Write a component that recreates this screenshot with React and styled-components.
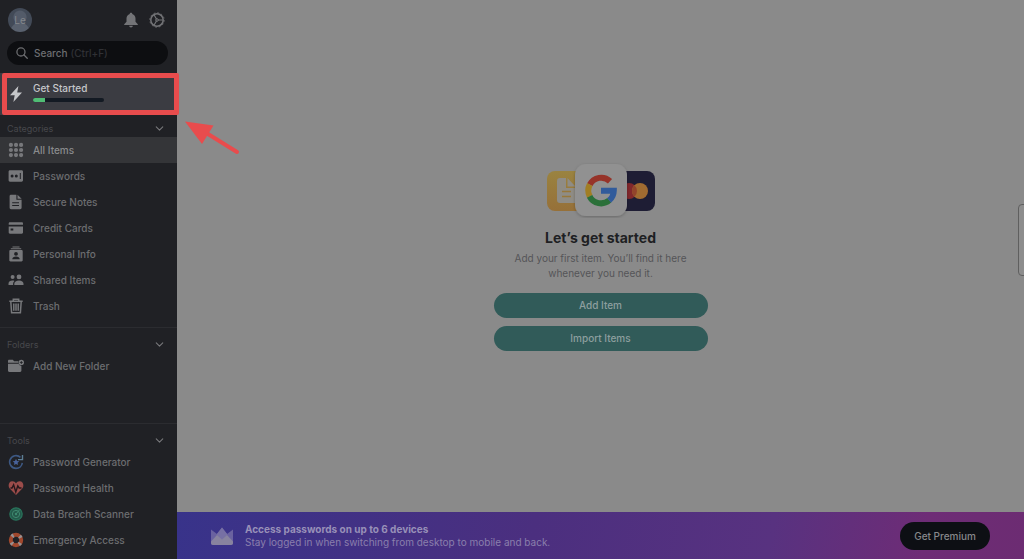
import React, { useState } from "react";
import styled, { createGlobalStyle } from "styled-components";
import { LuChevronDown } from "react-icons/lu";

const GlobalStyle = createGlobalStyle`
  *, *::before, *::after {
    box-sizing: border-box;
  }
  body {
    margin: 0;
    font-family: Inter, "Liberation Sans", sans-serif;
    font-size: 10px;
    background: #8a8a8a;
  }
  button, input {
    font: inherit;
    color: inherit;
    border: 0;
    padding: 0;
    background: none;
  }
  a {
    color: inherit;
    text-decoration: none;
  }
  svg {
    display: block;
    flex-shrink: 0;
  }
`

const Page = styled.div`
  position: relative;
  display: flex;
  min-height: 100vh;
  overflow: hidden;
`

const Sidebar = styled.aside`
  display: flex;
  flex-direction: column;
  width: 177px;
  flex-shrink: 0;
  padding-bottom: 6px;
  background: #202125;
  color: #757679;
`

const TopBar = styled.div`
  display: flex;
  align-items: center;
  gap: 10px;
  padding: 7px 12px 0 8px;
  height: 32px;
`

const Avatar = styled.button`
  width: 24px;
  height: 24px;
  margin-right: auto;
  border-radius: 50%;
  background: radial-gradient(circle at 50% 38%, #535b69 0 6px, transparent 7px),
    radial-gradient(circle at 50% 100%, #59616e 0 9px, transparent 10px), #424a57;
  color: #84878c;
`

const IconButton = styled.button`
  color: #737477;
`

const Search = styled.label`
  display: flex;
  align-items: center;
  gap: 3px;
  height: 24px;
  margin: 9px 9px 8px 7px;
  padding: 0 9px;
  border-radius: 12px;
  background: #0d0e11;
  color: #6d6e71;
  font-weight: 500;

  svg {
    margin-right: 3px;
  }
`

const Hint = styled.span`
  color: #303135;
`

const SearchInput = styled.input`
  flex: 1;
  min-width: 0;
  outline: none;
`

const GetStarted = styled.a`
  position: relative;
  display: flex;
  align-items: center;
  gap: 9px;
  height: 42px;
  padding: 0 8px;
  background: #3b3c42;
  color: #c6c7ca;
  font-weight: 500;
`

const Progress = styled.span`
  line-height: 16px;
  padding-bottom: 6px;
`

/* frame drawn round the row, a little wider than the sidebar */
const Frame = styled.span`
  position: absolute;
  inset: 0 -2px 0 2px;
  border: 5px solid #e84c4d;
  border-radius: 2px;
`

const Track = styled.span`
  display: block;
  width: 71px;
  height: 4px;
  margin-top: 2px;
  border-radius: 2px;
  background: #131a23;
  overflow: hidden;
`

const Bar = styled.span`
  display: block;
  height: 100%;
  background: #50bd74;
`

const Arrow = styled.svg`
  position: absolute;
  left: 184px;
  top: 119px;
  color: #e84c4d;
`

const Section = styled.section`
  padding: ${props => props.$line ? "7px 0 0" : "4px 0 8px"};
  flex-grow: ${props => props.$grow ? 1 : 0};
  border-top: ${props => props.$line ? "1px solid #2b2c30" : "0"};
`

const SectionHead = styled.button`
  display: flex;
  align-items: center;
  justify-content: space-between;
  width: 100%;
  height: 18px;
  padding: 0 11px 0 7px;
  color: #47484c;
  font-size: 9px;

  svg {
    color: #77787b;
  }
`

const List = styled.nav`
  display: flex;
  flex-direction: column;
`

const Item = styled.a`
  display: flex;
  align-items: center;
  gap: 9px;
  height: 26px;
  padding: 0 8px;
  font-weight: 500;
  background: ${props => props.$active ? "#343538" : "transparent"};
  color: ${props => props.$active ? "#8a8b8d" : "#6c6d70"};

  svg {
    color: #77787b;
  }
`

const Main = styled.main`
  display: flex;
  flex-direction: column;
  flex: 1;
  min-width: 0;
`

const Empty = styled.div`
  display: flex;
  flex-direction: column;
  align-items: center;
  justify-content: center;
  flex: 1;
  text-align: center;
`

const Title = styled.h1`
  margin: 10px 0 3px;
  font-size: 14px;
  line-height: 20px;
  font-weight: 700;
  color: #1e1f23;
`

const Text = styled.p`
  width: 190px;
  margin: 0 0 12px;
  line-height: 15px;
  color: #555558;
`

const TealButton = styled.button`
  width: 214px;
  height: 25px;
  margin-bottom: 8px;
  border-radius: 13px;
  background: #315b59;
  color: #8d9f9f;
  font-weight: 500;

  &:last-child {
    margin-bottom: 0;
  }
`

const Banner = styled.footer`
  display: flex;
  align-items: center;
  gap: 12px;
  height: 47px;
  padding: 0 34px;
  background: linear-gradient(100deg, #38338a 0%, #4b2f7f 42%, #583280 70%, #6e2c76 88%, #6c2c72 100%);
  color: #8a7fac;
`

const BannerText = styled.p`
  flex: 1;
  margin: 0;
  line-height: 13px;

  strong {
    display: block;
    font-weight: 700;
    color: #9890b8;
  }
`

const Premium = styled.button`
  width: 90px;
  height: 28px;
  border-radius: 14px;
  background: #0d0f14;
  color: #87888b;
  font-weight: 500;
`

const EdgeHandle = styled.button`
  position: absolute;
  right: -6px;
  top: 204px;
  width: 12px;
  height: 72px;
  border: 1px solid #5f5f5f;
  border-radius: 4px;
  background: #8d8d8d;
`

const Icon = ({ children, size = 16, ...rest }) => (
  <svg width={size} height={size} viewBox="0 0 16 16" fill="currentColor" aria-hidden="true" {...rest}>
    {children}
  </svg>
)

const BellIcon = () => (
  <Icon>
    <path d="M8 .8c.8 0 1.300.5 1.300 1.200 2 .6 3.200 2.300 3.200 4.500v3.300l2.300 2.500v.8H1.200v-.8l2.300-2.500V6.500c0-2.200 1.200-3.900 3.200-4.500C6.700 1.300 7.200.8 8 .8zM6.200 13.800h3.600c0 1-.8 1.700-1.800 1.700s-1.800-.7-1.800-1.700z" />
  </Icon>
)

const GearIcon = () => (
  <Icon fill="none" stroke="currentColor">
    <circle cx="8" cy="8" r="6.200" strokeWidth="1.500" />
    <circle cx="8" cy="8" r="7.200" strokeWidth=".8" strokeDasharray="1.885 1.885" />
    <path d="M8.800 8H14M7.600 7.300 5 2.800M7.600 8.700 5 13.200" strokeWidth="1.200" />
    <circle cx="8" cy="8" r="1.300" strokeWidth="1" />
  </Icon>
)

const SearchIcon = () => (
  <Icon size={12} fill="none" stroke="currentColor" strokeWidth="1.700" strokeLinecap="round">
    <circle cx="6.600" cy="6.600" r="5.400" />
    <path d="M10.700 10.700 15 15" />
  </Icon>
)

const BoltIcon = () => (
  <Icon>
    <path d="M10.400 0 2 9.300h4.700L5.400 16 14 6.500H9.200z" />
  </Icon>
)

const GridIcon = () => (
  <Icon>
    {[2.900, 8, 13.100].map(y => [2.900, 8, 13.100].map(x => (
      <circle key={`${x}-${y}`} cx={x} cy={y} r="2.100" />
    )))}
  </Icon>
)

const PasswordIcon = () => (
  <Icon>
    <path fillRule="evenodd" d="M2 2.300h11.600c.8 0 1.400.6 1.400 1.400v8.600c0 .8-.6 1.400-1.400 1.400H2c-.8 0-1.400-.6-1.400-1.400V3.700c0-.8.600-1.400 1.400-1.400zM4.100 6.500a1.500 1.500 0 100 3 1.500 1.500 0 000-3zM8.300 6.500a1.500 1.500 0 100 3 1.500 1.500 0 000-3zM11.800 5v6h1V5z" />
  </Icon>
)

const NoteIcon = () => (
  <Icon>
    <path fillRule="evenodd" d="M3 .8h5.400v5h5.200v8c0 .8-.6 1.400-1.400 1.400H3c-.8 0-1.400-.6-1.400-1.400V2.200C1.600 1.400 2.200.8 3 .8zM4.200 8.200v1h6.800v-1zM4.200 11v1h6.800v-1z" />
    <path d="M9.500.8 13.600 4.800H9.500z" />
  </Icon>
)

const CardIcon = () => (
  <Icon>
    <path d="M1.900 2.200h11.900c.7 0 1.200.5 1.200 1.200v1.400H.7V3.400c0-.7.500-1.200 1.200-1.200z" />
    <path fillRule="evenodd" d="M.7 6.500H15v6.100c0 .7-.5 1.200-1.200 1.200H1.900c-.7 0-1.200-.5-1.200-1.200zM2.600 8.400v2h2.700v-2z" />
  </Icon>
)

const PersonIcon = () => (
  <Icon>
    <path d="M4.500.4h7v1h-7zM2.800 2.200h10.400v1.100H2.800z" />
    <path fillRule="evenodd" d="M2.500 4.100h11c.7 0 1.200.5 1.200 1.200v8.900c0 .7-.5 1.200-1.200 1.200h-11c-.7 0-1.200-.5-1.200-1.200V5.300c0-.7.500-1.200 1.200-1.200zM8 6a1.900 1.900 0 100 3.800A1.900 1.900 0 008 6zM4.300 13.300h7.400c0-1.800-1.600-2.800-3.700-2.800s-3.700 1-3.700 2.800z" />
  </Icon>
)

const PeopleIcon = () => (
  <Icon>
    <circle cx="4.600" cy="4.900" r="2" />
    <circle cx="11" cy="4.900" r="2.400" />
    <path d="M.5 13v-1.200c0-2 1.700-3.200 4.100-3.200.7 0 1.300.1 1.800.3C5.600 9.700 5.100 10.700 5.100 12v1zM6.300 13v-1.200c0-2.100 1.900-3.400 4.700-3.400s4.500 1.300 4.500 3.400V13z" />
  </Icon>
)

const TrashIcon = () => (
  <Icon fill="none" stroke="currentColor" strokeWidth="1.500">
    <path d="M1.300 3.300h13.400M5.300 3V1.200h5.400V3M2.800 3.500l.8 11.300h8.800l.8-11.300M5.800 5.500v7.300M8 5.500v7.300M10.200 5.500v7.300" />
  </Icon>
)

const FolderIcon = () => (
  <Icon>
    <path d="M0 3c0-.7.500-1.200 1.200-1.200h3.600l1.300 1.400h4.200v1.500H0zM0 5.700h10.600c.4 1.300 1.400 2 2.800 2v4.900c0 .8-.5 1.300-1.300 1.300H1.300c-.8 0-1.300-.5-1.300-1.300z" />
    <path fillRule="evenodd" d="M13.300 1.700a2.700 2.700 0 110 5.400 2.700 2.700 0 010-5.400zM12.900 2.900v1.100h-1.100v.8h1.100v1.100h.8V4.800h1.100V4h-1.100V2.900z" />
  </Icon>
)

const GeneratorIcon = () => (
  <Icon fill="none">
    <path d="M12.500 3.400A6.400 6.400 0 108 14.400a6.400 6.400 0 006.300-5.600" stroke="#3d5883" strokeWidth="1.600" />
    <path d="M14.500 1v4.600H10" stroke="#5c7d93" strokeWidth="1.400" />
    <path d="m8 4.800 1 2.100 2.300.3-1.700 1.600.4 2.300-2-1.100-2 1.100.4-2.300-1.700-1.600 2.300-.3z" fill="#48629a" />
  </Icon>
)

const HealthIcon = () => (
  <Icon>
    <path fill="#9b4c4a" d="M8 15 1.700 8.400C-.3 6.200.5 1.200 4.400 1.200 6 1.200 7.200 2 8 3.200c.8-1.200 2-2 3.600-2 3.900 0 4.700 5 2.700 7.200z" />
    <path d="M2.500 8H4l1.600-3.200L7.800 12l2-6.200L11.200 8h2.300" fill="none" stroke="#25171b" strokeWidth="1.400" />
  </Icon>
)

const ScannerIcon = () => (
  <Icon fill="none">
    <circle cx="8" cy="8" r="6.200" fill="#24584a" stroke="#28735b" strokeWidth="1.200" />
    <circle cx="8" cy="8" r="3.600" stroke="#3f8a70" />
    <circle cx="8" cy="8" r="1.200" fill="#3f8a70" />
    <path d="m8 8 3.800-4.500" stroke="#3f8a70" />
  </Icon>
)

/* four pale bands sit on the diagonals of the ring */
const RingIcon = () => (
  <Icon fill="none" strokeWidth="4">
    <circle cx="8" cy="8" r="5.200" stroke="#a1482d" />
    <circle cx="8" cy="8" r="5.200" stroke="#989191" strokeDasharray="2 6.168" strokeDashoffset="-3.084" />
  </Icon>
)

const CrownIcon = () => (
  <svg width="22" height="20" viewBox="0 0 22 20" aria-hidden="true">
    <path fill="#6a62a0" d="M0 3.500 6 8l5-6.500L16 8l6-4.500V17c0 1.200-.8 2-2 2H2c-1.200 0-2-.8-2-2z" />
    <path fill="#7770a4" d="m11 1.500 5.500 7L11 14 5.500 8.500z" />
    <path fill="#88839f" d="M0 15.500 6 9l5 4.500L16 9l6 6.500V17c0 1.200-.8 2-2 2H2c-1.200 0-2-.8-2-2z" />
  </svg>
)

const Artwork = () => (
  <svg width="110" height="56" viewBox="0 0 110 56" aria-hidden="true">
    <defs>
      <linearGradient id="gold" x2="0" y2="1">
        <stop stopColor="#9a8340" />
        <stop offset="1" stopColor="#967039" />
      </linearGradient>
      <filter id="shadow" x="-20%" y="-20%" width="140%" height="140%">
        <feDropShadow dx="0" dy="1" stdDeviation="1.500" floodOpacity=".25" />
      </filter>
    </defs>
    <rect x="1" y="9" width="40" height="40" rx="8" fill="url(#gold)" />
    <path fill="#8f8c85" d="M14 16h6v10h9v15H14c-2 0-3-1-3-3V19c0-2 1-3 3-3zM21.500 16l8 8.500h-8z" />
    <path d="M16 29.500h9M16 34.500h9" stroke="#97773b" strokeWidth="1.500" />
    <rect x="69" y="9" width="40" height="40" rx="8" fill="#1e1d34" />
    <circle cx="83" cy="29" r="8" fill="#81282c" />
    <circle cx="94" cy="29" r="8" fill="#a06b31" />
    <path fill="#92442b" d="M88.500 23.200a8 8 0 010 11.600 8 8 0 010-11.600z" />
    <rect x="29" y="2" width="52" height="52" rx="11" fill="#919191" filter="url(#shadow)" />
    <g fill="none" strokeWidth="6">
      <path stroke="#963329" d="M43.800 22.700A12.800 12.800 0 0164 19.200" />
      <path stroke="#a17e24" d="M43.800 34.500A12.800 12.800 0 0143.800 22.500" />
      <path stroke="#2b7039" d="M43.600 34.300A12.800 12.800 0 0063.300 38.300" />
      <path stroke="#315b9b" d="M63.100 38.400A12.800 12.800 0 0067.800 28.700H55" />
    </g>
  </svg>
)

const categories = [
  { name: "All Items", icon: GridIcon },
  { name: "Passwords", icon: PasswordIcon },
  { name: "Secure Notes", icon: NoteIcon },
  { name: "Credit Cards", icon: CardIcon },
  { name: "Personal Info", icon: PersonIcon },
  { name: "Shared Items", icon: PeopleIcon },
  { name: "Trash", icon: TrashIcon },
]

const folders = [{ name: "Add New Folder", icon: FolderIcon }]

const tools = [
  { name: "Password Generator", icon: GeneratorIcon },
  { name: "Password Health", icon: HealthIcon },
  { name: "Data Breach Scanner", icon: ScannerIcon },
  { name: "Emergency Access", icon: RingIcon },
]

const SidebarSection = ({ title, items, active, onSelect, ...rest }) => {
  const [open, setOpen] = useState(true)

  return (
    <Section {...rest}>
      <SectionHead type="button" aria-expanded={open} onClick={() => setOpen(!open)}>
        {title}
        <LuChevronDown size={13} />
      </SectionHead>
      {open && (
        <List aria-label={title}>
          {items.map(({ name, icon: ItemIcon }) => (
            <Item key={name} href="#" $active={name === active} onClick={() => onSelect(name)}>
              <ItemIcon />
              {name}
            </Item>
          ))}
        </List>
      )}
    </Section>
  )
}

export default function App() {
  const [active, setActive] = useState("All Items")
  const progress = 17

  return (
    <Page>
      <GlobalStyle />
      <Sidebar>
        <TopBar>
          <Avatar type="button">Le</Avatar>
          <IconButton type="button" aria-label="Notifications"><BellIcon /></IconButton>
          <IconButton type="button" aria-label="Settings"><GearIcon /></IconButton>
        </TopBar>
        <Search>
          <SearchIcon />
          Search <Hint>(Ctrl+F)</Hint>
          <SearchInput type="text" />
        </Search>
        <GetStarted href="#">
          <BoltIcon />
          <Progress>
            Get Started
            <Track>
              <Bar style={{ width: `${progress}%` }} />
            </Track>
          </Progress>
          <Frame />
        </GetStarted>
        <SidebarSection title="Categories" items={categories} active={active} onSelect={setActive} />
        <SidebarSection title="Folders" items={folders} active={active} onSelect={setActive} $line $grow />
        <SidebarSection title="Tools" items={tools} active={active} onSelect={setActive} $line />
      </Sidebar>
      <Main>
        <Empty>
          <Artwork />
          <Title>Let’s get started</Title>
          <Text>Add your first item. You’ll find it here whenever you need it.</Text>
          <TealButton type="button">Add Item</TealButton>
          <TealButton type="button">Import Items</TealButton>
        </Empty>
        <Banner>
          <CrownIcon />
          <BannerText>
            <strong>Access passwords on up to 6 devices</strong>
            Stay logged in when switching from desktop to mobile and back.
          </BannerText>
          <Premium type="button">Get Premium</Premium>
        </Banner>
      </Main>
      <EdgeHandle type="button" aria-label="Open panel" />
      <Arrow width="58" height="38" viewBox="0 0 58 38" aria-hidden="true">
        <path d="M24 15 53 33" stroke="currentColor" strokeWidth="4" strokeLinecap="round" />
        <path fill="currentColor" d="M1 2.500 29.500 6.500 18 25z" />
      </Arrow>
    </Page>
  )
}
